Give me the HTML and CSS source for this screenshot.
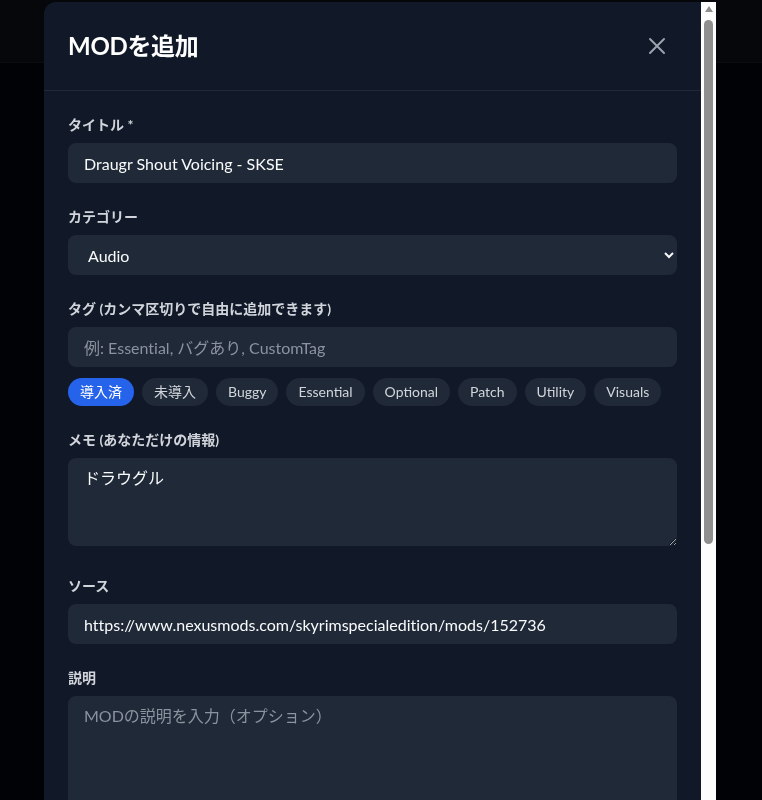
FILE: index.html
```html
<!DOCTYPE html>
<html lang="ja">
<head>
<meta charset="utf-8">
<title>MODを追加</title>
<link rel="stylesheet" href="styles.css">
</head>
<body>
  <header class="app-header"></header>

  <div class="overlay">
    <div class="modal">
      <div class="modal-content">
        <div class="modal-header">
          <h2 class="modal-title">MODを追加</h2>
          <button class="close-btn" type="button" aria-label="閉じる">
            <svg viewBox="0 0 24 24" width="24" height="24" fill="none" stroke="currentColor" stroke-width="2" stroke-linecap="round"><path d="M5 5l14 14M19 5L5 19"/></svg>
          </button>
        </div>

        <form class="modal-body">
          <div class="field">
            <label class="label">タイトル *</label>
            <input class="control" type="text" value="Draugr Shout Voicing - SKSE">
          </div>

          <div class="field">
            <label class="label">カテゴリー</label>
            <select class="control select">
              <option>Audio</option>
              <option>Gameplay</option>
              <option>Visuals</option>
            </select>
          </div>

          <div class="field">
            <label class="label">タグ (カンマ区切りで自由に追加できます)</label>
            <input class="control" type="text" placeholder="例: Essential, バグあり, CustomTag">
            <div class="chips">
              <button type="button" class="chip chip-active">導入済</button>
              <button type="button" class="chip">未導入</button>
              <button type="button" class="chip">Buggy</button>
              <button type="button" class="chip">Essential</button>
              <button type="button" class="chip">Optional</button>
              <button type="button" class="chip">Patch</button>
              <button type="button" class="chip">Utility</button>
              <button type="button" class="chip">Visuals</button>
            </div>
          </div>

          <div class="field">
            <label class="label">メモ (あなただけの情報)</label>
            <textarea class="control area" rows="3">ドラウグル</textarea>
          </div>

          <div class="field">
            <label class="label">ソース</label>
            <input class="control" type="text" value="https://www.nexusmods.com/skyrimspecialedition/mods/152736">
          </div>

          <div class="field">
            <label class="label">説明</label>
            <textarea class="control area" rows="6" placeholder="MODの説明を入力（オプション）"></textarea>
          </div>
        </form>
      </div>

      <!-- vertical scrollbar of the dialog -->
      <div class="scrollbar" aria-hidden="true">
        <span class="scroll-arrow"></span>
        <span class="scroll-thumb"></span>
      </div>
    </div>
  </div>
</body>
</html>
```

FILE: styles.css
```css
* {
  box-sizing: border-box;
}

html, body {
  margin: 0;
  height: 100%;
}

body {
  background: #030712;
  font-family: "Lato", "Noto Sans CJK JP", sans-serif;
  font-variant-ligatures: none;
  color: #f3f4f6;
  overflow: hidden;
}

.app-header {
  height: 63px;
  background: #111827;
  border-bottom: 1px solid #1f2937;
}

.overlay {
  position: fixed;
  inset: 0;
  background: rgba(0, 0, 0, 0.7);
  display: flex;
  justify-content: center;
  align-items: flex-start;
  padding-top: 2px;
}

.modal {
  width: 672px;
  height: 820px;
  flex-shrink: 0;
  margin-left: -2px;
  display: flex;
  background: #111827;
  border-radius: 12px 0 0 0;
  overflow: hidden;
}

.modal-content {
  flex: 1;
  min-width: 0;
}

/* scrollbar */
.scrollbar {
  width: 15px;
  flex-shrink: 0;
  background: #fdfdfd;
  display: flex;
  flex-direction: column;
  align-items: center;
}

.scroll-arrow {
  width: 0;
  height: 0;
  margin-top: 4px;
  border-left: 4.5px solid transparent;
  border-right: 4.5px solid transparent;
  border-bottom: 6px solid #8f8f8f;
}

.scroll-thumb {
  width: 9px;
  height: 524px;
  margin-top: 8px;
  border-radius: 5px;
  background: #8f8f8f;
}

.modal-header {
  display: flex;
  align-items: center;
  justify-content: space-between;
  padding: 24px;
  border-bottom: 1px solid #1f2937;
}

.modal-title {
  margin: 0;
  font-size: 24px;
  line-height: 32px;
  font-weight: 700;
  letter-spacing: -0.3px;
  color: #ffffff;
}

.close-btn {
  width: 40px;
  height: 40px;
  padding: 8px;
  border: none;
  border-radius: 8px;
  background: transparent;
  color: #9ca3af;
  display: flex;
  align-items: center;
  justify-content: center;
}

.close-btn svg {
  width: 24px;
  height: 24px;
  flex-shrink: 0;
}

.modal-body {
  padding: 24px;
  display: flex;
  flex-direction: column;
  gap: 24px;
}

.field {
  display: flex;
  flex-direction: column;
}

.label {
  font-size: 14px;
  line-height: 20px;
  font-weight: 700;
  color: #d1d5db;
  margin-bottom: 8px;
}

.control {
  width: 100%;
  border: none;
  outline: none;
  border-radius: 8px;
  background: #1f2937;
  color: #f9fafb;
  font-family: inherit;
  font-variant-ligatures: none;
  font-size: 16px;
  line-height: 24px;
  padding: 8px 16px;
  height: 40px;
}

.control::placeholder {
  color: #8b939f;
}

.select {
  padding-left: 16px;
  padding-right: 8px;
}

.area {
  height: auto;
  resize: vertical;
  margin-bottom: 6px;
}

.chips {
  display: flex;
  flex-wrap: wrap;
  gap: 8px;
  margin-top: 11px;
}

.chip {
  height: 28px;
  border: none;
  border-radius: 999px;
  padding: 4px 12px;
  font-family: inherit;
  font-size: 14px;
  line-height: 20px;
  background: #1f2937;
  color: #d1d5db;
}

.chip-active {
  background: #2563eb;
  color: #ffffff;
}
```
